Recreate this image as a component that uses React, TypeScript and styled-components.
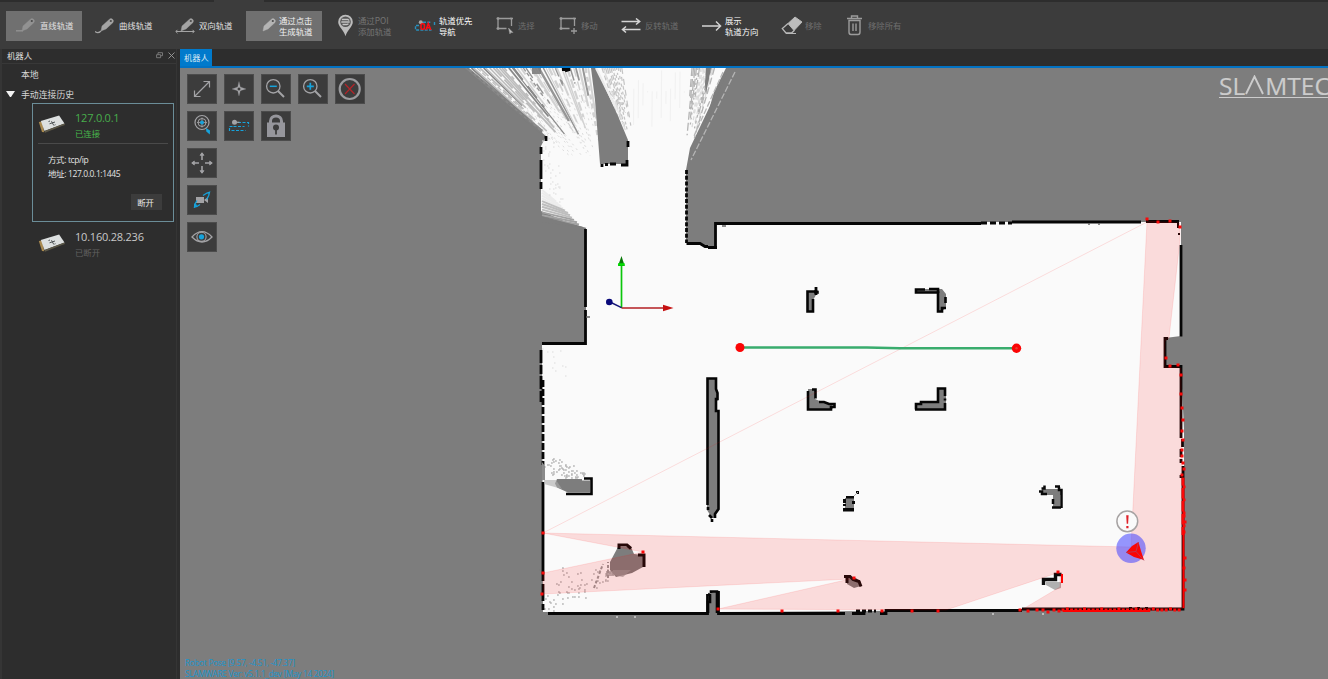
import React from "react";
import styled, { createGlobalStyle } from "styled-components";

const GlobalStyle = createGlobalStyle`
  * { box-sizing: border-box; }
  html, body { margin: 0; padding: 0; background: #2d2d2d; overflow: hidden; }
  body { font-family: "Open Sans", "Noto Sans CJK SC", sans-serif; font-size: 8.4px; color: #d6d6d6; }
  svg { display: block; flex: none; }
`;

const Window = styled.div`
  display: flex;
  flex-direction: column;
  width: 1328px;
  height: 679px;
  overflow: hidden;
  background: #2d2d2d;
`;

const MenuStrip = styled.div`
  height: 2px;
  flex: none;
  padding-left: 214px;
`;

const MenuTab = styled.div`
  width: 50px;
  height: 2px;
  background: #3c3c3c;
`;

const Toolbar = styled.div`
  display: flex;
  align-items: center;
  flex: none;
  height: 47px;
  padding-left: 6px;
  background: #3c3c3c;
`;

const ToolButton = styled.button<{ $w: number; $pad: number; $gap: number; $tone: string; $active?: boolean }>`
  display: flex;
  align-items: center;
  flex: none;
  width: ${(p) => p.$w}px;
  height: 30px;
  padding: 0 0 0 ${(p) => p.$pad}px;
  gap: ${(p) => p.$gap}px;
  border: 0;
  background: ${(p) => (p.$active ? "#707070" : "transparent")};
  color: ${(p) => p.$tone};
  font: 400 8.4px/10.5px "Noto Sans CJK SC", sans-serif;
  text-align: left;
  white-space: pre;
`;

const ToolLabel = styled.span<{ $right?: boolean }>`
  text-align: ${(p) => (p.$right ? "right" : "left")};
`;

const Body = styled.div`
  display: flex;
  flex: 1;
  min-height: 0;
`;

const SidePanel = styled.aside`
  display: flex;
  flex-direction: column;
  width: 177px;
  margin-right: 3px;
  border-left: 2px solid #353535;
  border-right: 1px solid #353535;
`;

const PanelTitle = styled.div`
  display: flex;
  align-items: center;
  height: 15px;
  padding: 0 1px 2px 5px;
  gap: 5px;
  border-bottom: 1px solid #383838;
  font-size: 8.4px;
  color: #e0e0e0;
  span { flex: 1; }
`;

const TreeRow = styled.div<{ $h: number }>`
  display: flex;
  align-items: center;
  height: ${(p) => p.$h}px;
  padding: 0 0 1px 4px;
  gap: 6px;
  font-size: 8.9px;
`;

const Caret = styled.i<{ $hidden?: boolean }>`
  width: 9px;
  height: 6px;
  visibility: ${(p) => (p.$hidden ? "hidden" : "visible")};
  border-left: 4.5px solid transparent;
  border-right: 4.5px solid transparent;
  border-top: 6px solid #f2f2f2;
`;

const DeviceCard = styled.section<{ $selected?: boolean }>`
  width: 142px;
  height: ${(p) => (p.$selected ? 119 : 44)}px;
  margin-left: 30px;
  padding: 5px 5px 6px;
  border: 1px solid ${(p) => (p.$selected ? "#6b8d98" : "transparent")};
`;

const DeviceHead = styled.div<{ $line?: boolean }>`
  display: flex;
  gap: 9px;
  height: 35px;
  border-bottom: 1px solid ${(p) => (p.$line ? "#4a4a4a" : "transparent")};
`;

const DeviceName = styled.div<{ $tone: string }>`
  color: ${(p) => p.$tone};
  font-size: 11px;
  line-height: 17px;
  letter-spacing: -0.22px;
  white-space: nowrap;
`;

const DeviceState = styled.div<{ $tone: string }>`
  color: ${(p) => p.$tone};
  font-size: 8.4px;
  line-height: 15px;
`;

const DeviceInfo = styled.div`
  padding: 9px 0 0 10px;
  font-size: 8.5px;
  line-height: 14px;
  letter-spacing: -0.38px;
  color: #e2e2e2;
`;

const DisconnectButton = styled.button`
  display: block;
  width: 31px;
  height: 16px;
  margin: 13px 6px 0 auto;
  padding: 0 2px 0 0;
  border: 0;
  background: #3c3c3c;
  color: #e8e8e8;
  font: 400 8.4px/16px "Noto Sans CJK SC", sans-serif;
`;

const MapColumn = styled.main`
  display: flex;
  flex-direction: column;
  flex: 1;
  min-width: 0;
`;

const Tabs = styled.div`
  display: flex;
  height: 19px;
  border-bottom: 2px solid #0272c3;
`;

const Tab = styled.div`
  width: 32px;
  height: 17px;
  padding-left: 4px;
  background: #007acc;
  color: #dceaf5;
  font-size: 8.2px;
  line-height: 18px;
`;

const Viewport = styled.div`
  position: relative;
  height: 611px;
  overflow: hidden;
  background: #7d7d7d;
`;

const MapTools = styled.div`
  position: absolute;
  left: 7px;
  top: 6px;
  display: grid;
  gap: 7px;
`;

const MapToolRow = styled.div`
  display: flex;
  gap: 7px;
`;

const MapTool = styled.button`
  display: grid;
  place-items: center;
  width: 30px;
  height: 30px;
  padding: 0;
  border: 1px solid #4c4c4c;
  background: #3c3c3c;
`;

const StatusText = styled.div`
  position: absolute;
  left: 5px;
  bottom: 0;
  color: #1a95cc;
  font: 8.2px/11px "Open Sans", sans-serif;
  letter-spacing: -0.25px;
  white-space: pre;
`;

const Brand = styled.div`
  position: absolute;
  left: 1039px;
  top: 5px;
  display: flex;
  align-items: center;
  height: 25px;
  width: 120px;
  border-bottom: 1px solid #cccccc;
  color: #cccccc;
  font: 24.5px/25px "Open Sans", sans-serif;
  letter-spacing: 0;
  white-space: nowrap;
  -webkit-text-stroke: 0.2px #cccccc;
`;

type Glyph = { tone?: string };

const Pencil = ({ tone = "#a4a4a4", trail }: Glyph & { trail?: "line" | "curve" | "both" }) => (
  <svg width="20" height="18" viewBox="0 0 20 18" fill="none" stroke={tone}>
    <path d="M7 9 14.5 2.2Q16 .8 17.6 2.3T18 5.5L11 12 6 14Z" fill={tone} strokeWidth=".4" />
    <circle cx="15.800" cy="4" r="1.100" fill="#4a4a4a" stroke="none" />
    {trail === "line" && <path d="M0 13.800h7" strokeWidth="1.4" />}
    {trail === "curve" && <path d="M0 14.5q3 2.500 6-.5" strokeWidth="1.2" />}
    {trail === "both" && <path d="M1 14.500h18M2.500 12.800.8 14.500l1.700 1.700M17.500 12.800l1.700 1.700-1.700 1.700" strokeWidth="1" />}
  </svg>
);

const PinIcon = () => (
  <svg width="17" height="23" viewBox="0 0 17 23">
    <path d="M8.5.7A7.2 7.2 0 0 0 1.2 8c0 4.6 5.6 8 7.3 14.2C10.2 16 15.8 12.600 15.800 8A7.200 7.200 0 0 0 8.500.7Z" fill="#bcbcbc" />
    <circle cx="8.500" cy="7.800" r="5.300" fill="#555" />
    <path d="M4.800 5.500h6l1.500 1M4.300 8h8.400M5.500 10.500h4l2-.7" stroke="#c4c4c4" strokeWidth="1.300" fill="none" />
  </svg>
);

const NavIcon = () => (
  <svg width="22" height="14" viewBox="0 0 22 14" fill="none">
    <path d="M9 3.200h8M20.500 3v4M5 6.500H1.500V11h16" stroke="#2790bd" strokeWidth="1.400" strokeDasharray="3 1.300" />
    <circle cx="6.800" cy="3.200" r="2" fill="#a6a6a6" />
    <rect x="7" y="4.700" width="3.400" height="5.600" rx="1.200" stroke="#fb0d14" strokeWidth="1.600" />
    <path d="m12 11 2.300-6.500L16.800 11M12.700 8.800h3.400" stroke="#fb0d14" strokeWidth="1.600" />
  </svg>
);

const RectIcon = ({ plus }: { plus?: boolean }) => (
  <svg width="18" height="18" viewBox="0 0 18 18" fill="none" stroke="#9b9b9b" strokeWidth="1.300">
    <path d="M10.500 11.500H2v-10h13.500V9" />
    <path d="M.5 1.500h3M2 0v3M14 1.500h3M2 10v3M.5 11.500h3" />
    {plus ? <path d="M15 11v6M12 14h6" /> : <path d="m12.500 11 4.500 4.500-2.200.1-.9 1.400Z" fill="#bebebe" strokeWidth=".5" />}
  </svg>
);

const SwapIcon = () => (
  <svg width="20" height="16" viewBox="0 0 20 16" fill="none" stroke="#d4d4d4" strokeWidth="1.500">
    <path d="M.5 3.500h18M15 .5l3.700 3-3.700 3M19.500 11.500H1.500M5 8.500l-3.500 3 3.500 3" />
  </svg>
);

const ArrowIcon = () => (
  <svg width="20" height="12" viewBox="0 0 20 12" fill="none" stroke="#d4d4d4" strokeWidth="1.400">
    <path d="M0 6h18.500M14 1.500 18.600 6 14 10.500" />
  </svg>
);

const EraserIcon = () => (
  <svg width="22" height="19" viewBox="0 0 22 19" fill="none" stroke="#b9b9b9">
    <path d="m7 7.500 7-6.500 7 5-8 8.500Z" fill="#bdbdbd" />
    <path d="M7 7.500 1.300 12.600 5 17h5.500l3-2.700" strokeWidth="1.300" />
    <path d="M5 17.500h10" strokeWidth="1" />
  </svg>
);

const TrashIcon = () => (
  <svg width="15" height="21" viewBox="0 0 15 21" fill="none" stroke="#9c9c9c" strokeWidth="1.400">
    <path d="M0 3.500h15M4.500 3V1h6v2M2 5.500V17q0 2.500 2 2.500h7q2 0 2-2.500V5.500ZM6 8.500v7.500M9 8.500v7.500" />
  </svg>
);

const DeviceIcon = () => (
  <svg width="28" height="28" viewBox="0 -5 28 28">
    <path d="m.8 8 3.200 10 2.300.3L4 7.500Z" fill="#a98a50" />
    <path d="m2.800 7 18.300-5.500L26.500 9.500 6.500 17Z" fill="#dde0e0" />
    <path d="m6.500 17 20-7.500.5 1.500-3 1L7 18.800Z" fill="#5c5848" />
    <path d="m11.500 9.800 5.500-1.800M13.500 7.300l2.300 4.200M10.500 7.500l1.500-.5M16.500 11l1-.3" stroke="#4e5355" strokeWidth="1" />
  </svg>
);

const G = "#a3a3a6";
const B = "#16a3dc";

const mapIcons: Record<string, React.ReactNode> = {
  expand: <path d="m8 22 14-14M16.500 7.500h6v6M13.500 22.500h-6v-6" stroke={G} strokeWidth="1.200" />,
  locate: (
    <g stroke={G} strokeWidth="1">
      <path d="m15 7.500 1.300 5.400L22 15l-5.700 1.700L15 22l-1.300-5.300L8 15l5.700-2.100Z" fill={G} strokeWidth=".2" />
      <circle cx="15" cy="15" r="2" fill="#3c3c3c" />
    </g>
  ),
  out: <g><circle cx="12.300" cy="12.300" r="6.700" stroke={G} strokeWidth="1.300" /><path d="m17 17 6 6" stroke={G} strokeWidth="1.900" /><path d="M8.800 12.300h7" stroke={B} strokeWidth="1.500" /></g>,
  in: <g><circle cx="12.300" cy="12.300" r="6.700" stroke={G} strokeWidth="1.300" /><path d="m17 17 6 6" stroke={G} strokeWidth="1.900" /><path d="M8.800 12.300h7M12.300 8.800v7" stroke={B} strokeWidth="1.700" /></g>,
  cancel: <g><circle cx="14.700" cy="15" r="10" stroke="#9b9b9e" strokeWidth="2.200" /><path d="m10 10 9.500 10M19.500 10 10 20" stroke="#b32429" strokeWidth="1.200" /></g>,
  zoomFit: (
    <g>
      <circle cx="15" cy="11.500" r="7" stroke={G} strokeWidth="1.200" />
      <circle cx="15" cy="11.500" r="4" stroke={G} strokeWidth="1" />
      <path d="M10 11.500h10M15 6.500v10" stroke={G} strokeWidth=".8" />
      <circle cx="15" cy="11.500" r="2" fill={B} />
      <path d="m19 17 4 2.500-.2 4-3.500-3Z" fill={B} />
    </g>
  ),
  track: (
    <g strokeWidth="1.200">
      <path d="M14 11.500h10.500v4M8.500 15.500H5.500v4h16M9.500 15.500h11" stroke={B} strokeDasharray="3 1.500" />
      <path d="M10.500 11.300h5" stroke={G} /><circle cx="10.500" cy="11.300" r="2.500" fill={G} />
    </g>
  ),
  lock: (
    <g>
      <path d="M9.500 13.500V10a5.500 5 0 0 1 11 0v3.500" stroke="#96969c" strokeWidth="3" />
      <path d="M6 11.500h18V26H6Z" fill="#96969c" />
      <circle cx="15" cy="16.500" r="3" fill="#3c3c3c" /><path d="M15 17v6.500" stroke="#3c3c3c" strokeWidth="1.800" />
    </g>
  ),
  move: (
    <g stroke={G} strokeWidth="1.600">
      <path d="M15 5v7M15 18v7M5 15h7M18 15h7" />
      <path d="m13 7.300 2-2.600 2 2.600ZM13 22.700l2 2.600 2-2.600ZM7.300 13l-2.600 2 2.600 2ZM22.700 13l2.600 2-2.600 2Z" strokeWidth=".8" fill={G} />
    </g>
  ),
  camera: (
    <g>
      <path d="M9 12h8v6H9ZM17 15l4-3v6Z" fill={G} />
      <path d="M16 10.500 20 8l2.500-.7-.8 3.200-2 4M13 19.500l-3 2-2.500.7.500-3.200 2-3.500" stroke={B} strokeWidth="1.300" />
      <path d="m7 18.500 3.500 1.500-3.500 3Z" fill={B} />
    </g>
  ),
  eye: (
    <g>
      <path d="M5 15q5-5.300 10-5.300T25 15q-5 5-10 5T5 15Z" stroke={G} strokeWidth="1.300" />
      <circle cx="14.500" cy="14.800" r="4.600" stroke={G} strokeWidth="1.100" /><circle cx="14.500" cy="14.800" r="2.600" fill={B} />
    </g>
  ),
};

const toolRows = [["expand", "locate", "out", "in", "cancel"], ["zoomFit", "track", "lock"], ["move"], ["camera"], ["eye"]];

const random = (seed: number) => () => {
  seed = (seed * 16807) % 2147483647;
  return seed / 2147483647;
};

type Ray = { d: string; color: string; w: number; dash?: string };

const buildRays = (): Ray[] => {
  const r = random(4211);
  const rays: Ray[] = [];
  const to = (x: number, cx: number, cy: number, a: number, b: number) =>
    `M${(x + (cx - x) * a).toFixed(1)} ${(68 + (cy - 68) * a).toFixed(1)}L${(x + (cx - x) * b).toFixed(1)} ${(68 + (cy - 68) * b).toFixed(1)}`;
  for (let i = 0; i < 40; i++) {
    const x = 467 + i * 3.1 + r() * 2;
    const left = x < 515;
    const len = left ? 0.25 + r() * 0.33 : 0.12 + r() * 0.5;
    rays.push({
      d: to(x, 607, 188, 0, len),
      color: left ? (r() > 0.5 ? "#888888" : "#bdbdbd") : r() > 0.65 ? "#969696" : "#d2d2d2",
      w: left ? 1.1 + r() * 0.9 : 1 + r() * 1.6,
      dash: r() > 0.4 ? `${(3 + r() * 12).toFixed(0)} ${(2 + r() * 6).toFixed(0)}` : undefined,
    });
    rays.push({ d: to(x + 1, 607, 188, len, len + 0.18), color: "#dddddd", w: 1, dash: "2 4" });
  }
  for (let i = 0; i < 16; i++) {
    const x = 692 + i * 1.5;
    rays.push({ d: to(x, 683, 178, 0, 0.25 + r() * 0.45), color: r() > 0.5 ? "#b4b4b4" : "#dcdcdc", w: 1.3, dash: `${(2 + r() * 8).toFixed(0)} 3` });
  }
  for (let i = 0; i < 12; i++) {
    const x = 602 + i * 1.8;
    rays.push({ d: to(x, 640, 185, 0, 0.2 + r() * 0.35), color: "#c4c4c4", w: 1.2, dash: `${(2 + r() * 4).toFixed(0)} ${(2 + r() * 4).toFixed(0)}` });
  }
  for (let i = 0; i < 12; i++) {
    const x = 634 + i * 4.6;
    rays.push({ d: to(x, x - 1, 185, r() * 0.2, 0.2 + r() * 0.4), color: "#f1f1f1", w: 1 });
  }
  for (let i = 0; i < 11; i++) {
    const y = 190 + i * 2.8;
    rays.push({ d: `M542 ${y}L${(556 + i * 2.3).toFixed(0)} ${(y + 6 + (11 - i) * 0.5).toFixed(1)}`, color: i < 4 ? "#ececec" : i < 8 ? "#bebebe" : "#a2a2a2", w: 2 });
  }
  return rays;
};

const rays = buildRays();

type Dot = [number, number];

const speckle = (seed: number, n: number, x0: number, y0: number, x1: number, y1: number, spread: number): Dot[] => {
  const r = random(seed);
  return Array.from({ length: n }, () => {
    const t = r();
    return [Math.round(x0 + (x1 - x0) * t + (r() - 0.5) * spread), Math.round(y0 + (y1 - y0) * t + (r() - 0.5) * spread)];
  });
};

const greySpecks: Dot[] = [
  ...speckle(77, 75, 546, 462, 582, 480, 14),
  ...speckle(912, 60, 546, 606, 624, 564, 14),
  ...speckle(31, 16, 548, 572, 600, 590, 22),
];

const faintSpecks: Dot[] = [...speckle(55, 40, 546, 140, 556, 200, 14), ...speckle(21, 12, 548, 346, 566, 370, 16)];

const hits: Dot[] = [
  [1147, 219], [1158, 222], [1170, 221], [1180, 227], [1166, 358], [1170, 366], [1178, 365], [1181, 375], [1181, 394],
  [1182, 408], [1183, 420], [1182, 431], [1183, 440], [1182, 450], [1182, 456], [1183, 463], [1184, 469], [1182, 475],
  [543, 533], [543, 573], [542, 594], [643, 552], [718, 609], [782, 611], [838, 611], [882, 611], [912, 611], [938, 611],
  [854, 578], [1058, 572], [1020, 610], [1028, 611], [1037, 610], [1043, 610], [1048, 612], [1054, 610], [1059, 611],
  ...Array.from({ length: 22 }, (_, i): Dot => [1183 + (i % 5 === 3 ? 1 : 0), 479 + i * 2.6]),
  ...Array.from({ length: 28 }, (_, i): Dot => [1063 + i * 4.3, 610 - (i % 4 === 1 ? 1 : 0)]),
  [1184, 516], [1185, 522], [1184, 532], [1185, 558], [1184, 568], [1185, 580], [1185, 590],
];

const OccupancyMap = () => (
  <svg width="1148" height="611" viewBox="180 68 1148 611" fill="none">
    <path
      fill="#fafafa"
      d="M465 68 546 136 541 146V211L564 221 586 228V343H542L543 612H715L1184 609V430L1181 367H1165V338L1181 336V222H716V248H708L700 243H686V170L690 148 728 68Z"
    />
    {rays.map((ray, i) => (
      <path key={i} d={ray.d} stroke={ray.color} strokeWidth={ray.w} strokeDasharray={ray.dash} />
    ))}
    <g fill="#7d7d7d">
      <path d="M591 68 595 100 600 164H628V140L618 116 596 68Z" />
      <path d="M532 68h9v6h-9ZM463 68h6l74 62-2 4Z" opacity=".9" />
      <path d="M705 84l1-16h5l-5 26ZM714 92l12-24h3l-24 56ZM541 216l46 12-46-6Z" />
      <path d="M1166 338h16v29h-16Z" />
    </g>
    <path d="M596 68 618 112" stroke="#ededed" strokeWidth="2.200" />
    <path d="M604 70 626 132" stroke="#e0e0e0" strokeWidth="1.500" strokeDasharray="9 2" />
    <path d="M735 72 691 160M723 72 694 136" stroke="#b5b5b5" strokeWidth="1.300" strokeDasharray="6 2" />

    <path stroke="#777" strokeOpacity=".5" strokeWidth="1.600" d={greySpecks.map(([x, y]) => `M${x} ${y}h1.800`).join("")} />
    <path stroke="#ddd" strokeOpacity=".7" strokeWidth="1.500" d={faintSpecks.map(([x, y]) => `M${x} ${y}h1.500`).join("")} />

    <g stroke="#060606" strokeWidth="2.800" strokeLinejoin="miter">
      <path d="M585.500 229V307M585.500 310V343.500H542M715.500 248V223.500H981M708 247.500H717M686.500 243.500H700L705 246.500H708" />
      <path d="M546 136v5M541 147v7M541 160v19M541 182v7M562 69.500h8l-5 1.500" />
      <path d="M686.500 170V243" strokeDasharray="4 1.800" />
      <path d="M602 164v3M605 164.500h3M610 164h6M621 165h6v-5M628 141v6" />
      <path d="M541 350v24M541 376v26" strokeDasharray="13 2" />
      <path d="M543 380V465" strokeDasharray="7 2" />
      <path d="M543 482V581M543 584v17M543 604v6M548 613.500H707.500V594M718.500 591V613.500H845M852 613.500h12v-2M880 613.500h6v-3H1022" />
      <path d="M856 611h20" strokeDasharray="4 2" />
      <path d="M981 223H1012" strokeDasharray="6 3" />
      <path d="M1012 222H1141M1146 221.500H1179M1181 245V336.500M1168 338.500h-3V366.500H1181V438M1182.500 439v8M1181 449v8M1181 459v4M1181 475v3M1183 466V609H1022" />
      <path d="M1178 222v6M1178 234h2" strokeWidth="2" />
      <path d="M1129 608h24" strokeWidth="2" strokeDasharray="3 5" />
    </g>

    <g fill="#7d7d7d">
      <path d="M707 378h9v12l2 4v6l-2 2v9h3v98l-4 5v4h-3l-5-8Z" />
      <path d="M709 616v-20l2-4h6v24Z" />
      <path d="M807 291h9v4l-3 5v12h-6ZM816 294h3v-3h-3Z" />
      <path d="M916 289h13v1h9v-1h4l4 5v14l-4 3h-4v-18h-22Z" />
      <path d="M808 389h7v10l7 3 9 2 3 3-3 3h-23Z" />
      <path d="M916 404l6-2h16v-14h8v22h-30Z" />
      <path d="M557 479h25v1.500h8v12H568l-11-5-2-4Z" />
    </g>
    <g stroke="#050505" strokeWidth="2.600">
      <path d="M707.500 505V378.500H716V389L717.500 393V399H716V411H718.500V509L715 514V518" />
      <path d="M708 507v3M709 515l3 3M712 519V522" />
      <path d="M708 613V602H710V595L708 594M711 593V591.500H717V613" />
      <path d="M817 291.500H807.500V311.500H813V299" />
      <path d="M816 287v8M814 292h4.500" strokeWidth="2.800" />
      <path d="M925 289.500H916V292.500H938V311.500H942V308H946" />
      <path d="M929 289h9v4M945.500 297v6" />
      <path d="M808 391V409.500H831V407H834.500V404H829L824 402H819M812 389.500h3.500v9" />
      <path d="M916 409.500V404H921V402H938V388.500H945V396M945 403V409.500H915M945 398.500v2" />
      <path d="M584 478.500H591.500V494H566" />
    </g>
    <path d="M544 480l12 0 6 9-18-5Z" fill="#aaa" opacity=".6" />
    <path d="M542 462l3 4v14h-3Z" fill="#8a8a8a" />

    <g>
      <path d="M845 498h9v12h-9Z" fill="#7d7d7d" />
      <path d="M843 499h3v4h-3ZM846 496h8v2.500h-8ZM852 501h3v3h-3ZM843 508h11v3.500h-11ZM843 504h3v2h-3ZM856 491h3v3h-3Z" fill="#080808" />
      <path d="M854 496l4-4" stroke="#aaa" />
      <path d="M1042 489h19v6h-19ZM1053 495h7v12h-7Z" fill="#7d7d7d" />
      <path d="M1055 486.500h5M1059 487v3h2.500v18M1061 507.500h-9M1053 499v5M1044.500 485.500v3h-3M1039 491.500h3v2.500h5" stroke="#080808" strokeWidth="2.500" />
      <path d="M610 562 618 547H631L634 554 643 555V567L632 573 616 577 610 570Z" fill="#7d7d7d" />
      <path d="M619 549V545H627L631 548.500M638 555h6v12" stroke="#080808" strokeWidth="3" />
      <path d="M613 570h18l-8 7-10-2ZM606 571h8v5h-8Z" fill="#999" fillOpacity=".7" />
      <path d="M594 588 603 564M608 578v-16" stroke="#999" strokeWidth="2" strokeDasharray="3 2" />
      <path d="M847 578h9l5 4v4l-7 2-7-4Z" fill="#7d7d7d" />
      <path d="M844 576.500h6l3 3 6 2 2 5M847 578v5" stroke="#0c0c0c" strokeWidth="3" />
      <path d="M1046 582h15v6l-6 2-9-5Z" fill="#b0b0b0" />
      <path d="M1043.500 585v-5.500h12v-5h6" stroke="#0b0b0b" strokeWidth="3.400" />
    </g>

    <path
      fill="#f00"
      fillOpacity=".12"
      stroke="#f00"
      strokeOpacity=".1"
      d="M1131 547 1147 221 1180 223V240L1169 338 1165 341V367L1181 368 1184 609H1023L1060 587V572L946 610 718 609 850 579 543 594V573L643 552 543 533Z"
    />
    <path d="M543 533 1147 222" stroke="#f00" strokeOpacity=".12" strokeWidth="1" />
    <path d={hits.map(([x, y]) => `M${x - 1.5} ${y}h3`).join("")} stroke="#fb0909" strokeWidth="2.800" />
    <path d="M1183.500 530V608M1062 574v9M1063 611H1150" stroke="#f00" strokeWidth="2" />

    <path d="M740 347.500H867L900 348.300H1016" stroke="#39ac6d" strokeWidth="2.600" />
    <circle cx="740" cy="347.500" r="4.500" fill="#fb0505" />
    <circle cx="1016.500" cy="348.300" r="4.700" fill="#fb0505" />
    <circle cx="1016.500" cy="348.300" r="1.200" fill="#e83c30" />

    <path d="M621.500 308V266" stroke="#0bc60b" strokeWidth="1.700" />
    <path d="m618 266 3.500-10 3.200 10Z" fill="#067806" />
    <path d="M618 264.500h6.700" stroke="#00e000" strokeWidth="2.500" />
    <path d="M621.500 308H664" stroke="#b31e22" strokeWidth="1.500" />
    <path d="m663 304.800 10.500 3.200-10.500 3.200Z" fill="#c51010" />
    <path d="m610 302 11.500 5.700" stroke="#151579" strokeWidth="1.500" />
    <circle cx="609.300" cy="302" r="3.300" fill="#090979" />

    <circle cx="1131" cy="548.300" r="14.700" fill="#4242ff" fillOpacity=".55" />
    <path d="m1126 552.500 6-6.500 6.500-4 2.500 9 3 9-10-3Z" fill="#fa0505" />
    <path d="m1126 552.500 10-1 8 9M1136 551.500l2.500-9.500" stroke="#b04060" strokeWidth=".8" />
    <circle cx="1127.300" cy="521.300" r="10.400" fill="#fafafa" stroke="#a7a3a3" strokeWidth="1.500" />
    <path d="M1126.200 515.300h2.400l-.5 8.500h-1.400ZM1126.300 526h2.200v2.200h-2.200Z" fill="#df2028" />
    <path d="M617 616v2M635 616v2M993 613v2M1043 613v2" stroke="#bbb" strokeWidth="2" />
    <path d="M722 226h4M1088 224h2M1098 224h2M586 317h4" stroke="#666" strokeWidth="1.500" />
  </svg>
);

const App = () => (
  <Window>
    <GlobalStyle />
    <MenuStrip><MenuTab /></MenuStrip>
    <Toolbar>
      <ToolButton $w={76} $pad={10} $gap={4} $tone="#e2e2e2" $active><Pencil trail="line" tone="#929292" />直线轨道</ToolButton>
      <ToolButton $w={84} $pad={13} $gap={4} $tone="#e0e0e0"><Pencil trail="curve" />曲线轨道</ToolButton>
      <ToolButton $w={80} $pad={9} $gap={4} $tone="#e0e0e0"><Pencil trail="both" />双向轨道</ToolButton>
      <ToolButton $w={76} $pad={11} $gap={2} $tone="#f0f0f0" $active>
        <Pencil tone="#b4b4b4" /><ToolLabel $right>{"通过点击\n生成轨道"}</ToolLabel>
      </ToolButton>
      <ToolButton $w={84} $pad={15} $gap={4} $tone="#747474"><PinIcon />{"通过POI\n添加轨道"}</ToolButton>
      <ToolButton $w={80} $pad={8} $gap={3} $tone="#ffffff"><NavIcon />{"轨道优先\n导航"}</ToolButton>
      <ToolButton $w={63} $pad={10} $gap={4} $tone="#6e6e6e"><RectIcon />选择</ToolButton>
      <ToolButton $w={62} $pad={10} $gap={4} $tone="#6e6e6e"><RectIcon plus />移动</ToolButton>
      <ToolButton $w={81} $pad={10} $gap={4} $tone="#6e6e6e"><SwapIcon />反转轨道</ToolButton>
      <ToolButton $w={79} $pad={10} $gap={3} $tone="#f8f8f8"><ArrowIcon />{"展示\n轨道方向"}</ToolButton>
      <ToolButton $w={66} $pad={10} $gap={2} $tone="#6e6e6e"><EraserIcon />移除</ToolButton>
      <ToolButton $w={80} $pad={10} $gap={6} $tone="#6e6e6e"><TrashIcon />移除所有</ToolButton>
    </Toolbar>
    <Body>
      <SidePanel>
        <PanelTitle>
          <span>机器人</span>
          <svg width="7" height="7" viewBox="0 0 7 7" fill="none" stroke="#898989" strokeWidth=".8"><path d="M2 2.500V.7h4.500v3H5M.6 2.700h4v3h-4Z" /></svg>
          <svg width="7" height="7" viewBox="0 0 7 7" stroke="#9c9c9c" strokeWidth=".9"><path d="m.5.5 6 6M6.500.5l-6 6" /></svg>
        </PanelTitle>
        <TreeRow $h={22}><Caret $hidden />本地</TreeRow>
        <TreeRow $h={17}><Caret />手动连接历史</TreeRow>
        <DeviceCard $selected>
          <DeviceHead $line>
            <DeviceIcon />
            <div>
              <DeviceName $tone="#48ad4c">127.0.0.1</DeviceName>
              <DeviceState $tone="#48b84c">已连接</DeviceState>
            </div>
          </DeviceHead>
          <DeviceInfo>方式: tcp/ip<br />地址: 127.0.0.1:1445</DeviceInfo>
          <DisconnectButton>断开</DisconnectButton>
        </DeviceCard>
        <DeviceCard>
          <DeviceHead>
            <DeviceIcon />
            <div>
              <DeviceName $tone="#c9c9c9">10.160.28.236</DeviceName>
              <DeviceState $tone="#616161">已断开</DeviceState>
            </div>
          </DeviceHead>
        </DeviceCard>
      </SidePanel>
      <MapColumn>
        <Tabs><Tab>机器人</Tab></Tabs>
        <Viewport>
          <OccupancyMap />
          <MapTools>
            {toolRows.map((row) => (
              <MapToolRow key={row[0]}>
                {row.map((name) => (
                  <MapTool key={name}>
                    <svg width="28" height="28" viewBox="1 1 28 28" fill="none">{mapIcons[name]}</svg>
                  </MapTool>
                ))}
              </MapToolRow>
            ))}
          </MapTools>
          <Brand>
            SL
            <svg width="20" height="20" viewBox="0 0 20 20" fill="none" stroke="#cccccc" strokeWidth="1.900"><path d="M1 19 9.500 1.500 18 19" /></svg>
            MTEC
          </Brand>
          <StatusText>{"Robot Pose [9.57, -4.51, -47.37]\nSLAMWARE Ver: v5.1.1_dev [May 14 2024]"}</StatusText>
        </Viewport>
      </MapColumn>
    </Body>
  </Window>
);

export default App;
